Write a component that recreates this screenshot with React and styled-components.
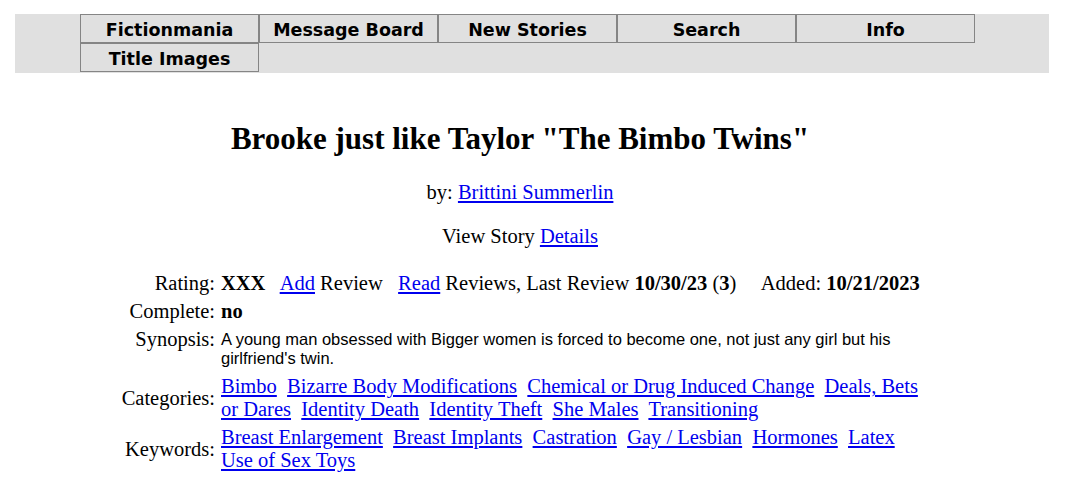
import React from "react";
import styled, { createGlobalStyle } from "styled-components";

const GlobalStyle = createGlobalStyle`
  body {
    margin: 0;
    background: #ffffff;
    color: #000000;
    font-family: "Liberation Serif", "Times New Roman", serif;
  }
`;

const NavBar = styled.div`
  margin: 14px 19px 0 15px;
  height: 59px;
  background: #e0e0e0;
  padding-left: 65px;
`;

const NavGrid = styled.div`
  display: grid;
  grid-template-columns: repeat(5, 179px);
  grid-auto-rows: 29px;
`;

const NavCell = styled.a`
  display: flex;
  align-items: center;
  justify-content: center;
  padding-top: 2px;
  border: 1px solid #858585;
  background: #e0e0e0;
  color: #000;
  text-decoration: none;
  font-family: "DejaVu Sans", Verdana, sans-serif;
  font-weight: bold;
  font-size: 17.5px;
`;

const Main = styled.div`
  width: 1040px;
  display: flex;
  flex-direction: column;
  align-items: center;
`;

const Title = styled.h1`
  margin: 48px 0 0;
  font-size: 31px;
  line-height: 36px;
  font-weight: bold;
`;

const Line = styled.div`
  margin-top: ${(p) => p.$gap}px;
  font-size: 20.5px;
  line-height: 23px;
`;

const Link = styled.a`
  color: #0000ee;
  text-decoration: underline;
`;

const Details = styled.div`
  align-self: flex-start;
  margin: 24px 0 0 115px;
  display: grid;
  grid-template-columns: 100px 705px;
  column-gap: 6px;
  row-gap: 5px;
  font-size: 20.5px;
  line-height: 23px;
`;

const Label = styled.div`
  text-align: right;
  align-self: ${(p) => p.$align || "center"};
`;

const Value = styled.div`
  align-self: center;
`;

const Synopsis = styled.div`
  padding: 2px 0 2px;
  font-family: "Liberation Sans", Arial, sans-serif;
  font-size: 16.5px;
  line-height: 19px;
`;

const nav = ["Fictionmania", "Message Board", "New Stories", "Search", "Info", "Title Images"];

const categories = [
  "Bimbo",
  "Bizarre Body Modifications",
  "Chemical or Drug Induced Change",
  "Deals, Bets or Dares",
  "Identity Death",
  "Identity Theft",
  "She Males",
  "Transitioning",
];

const keywords = [
  "Breast Enlargement",
  "Breast Implants",
  "Castration",
  "Gay / Lesbian",
  "Hormones",
  "Latex",
  "Use of Sex Toys",
];

const LinkList = ({ items }) => (
  <Value>
    {items.map((item, i) => (
      <React.Fragment key={item}>
        {i > 0 && "\u00a0 "}
        <Link href="#">{item}</Link>
      </React.Fragment>
    ))}
  </Value>
);

const App = () => {
  return (
    <>
      <GlobalStyle />
      <NavBar>
        <NavGrid>
          {nav.map((n) => (
            <NavCell key={n} href="#">
              {n}
            </NavCell>
          ))}
        </NavGrid>
      </NavBar>
      <Main>
        <Title>Brooke just like Taylor "The Bimbo Twins"</Title>
        <Line $gap={24}>
          by: <Link href="#"> Brittini Summerlin</Link>
        </Line>
        <Line $gap={21}>
          View Story <Link href="#">Details</Link>
        </Line>
        <Details>
          <Label>Rating:</Label>
          <Value>
            <b>XXX</b>&nbsp;&nbsp; <Link href="#">Add</Link> Review&nbsp;&nbsp;{" "}
            <Link href="#">Read</Link> Reviews, Last Review <b>10/30/23</b> (<b>3</b>)&nbsp;&nbsp;&nbsp;&nbsp;{" "}
            Added: <b>10/21/2023</b>
          </Value>
          <Label>Complete:</Label>
          <Value>
            <b>no</b>
          </Value>
          <Label $align="start">Synopsis:</Label>
          <Synopsis>
            A young man obsessed with Bigger women is forced to become one, not just any girl but his
            girlfriend's twin.
          </Synopsis>
          <Label>Categories:</Label>
          <LinkList items={categories} />
          <Label>Keywords:</Label>
          <LinkList items={keywords} />
        </Details>
      </Main>
    </>
  );
};

export default App;
